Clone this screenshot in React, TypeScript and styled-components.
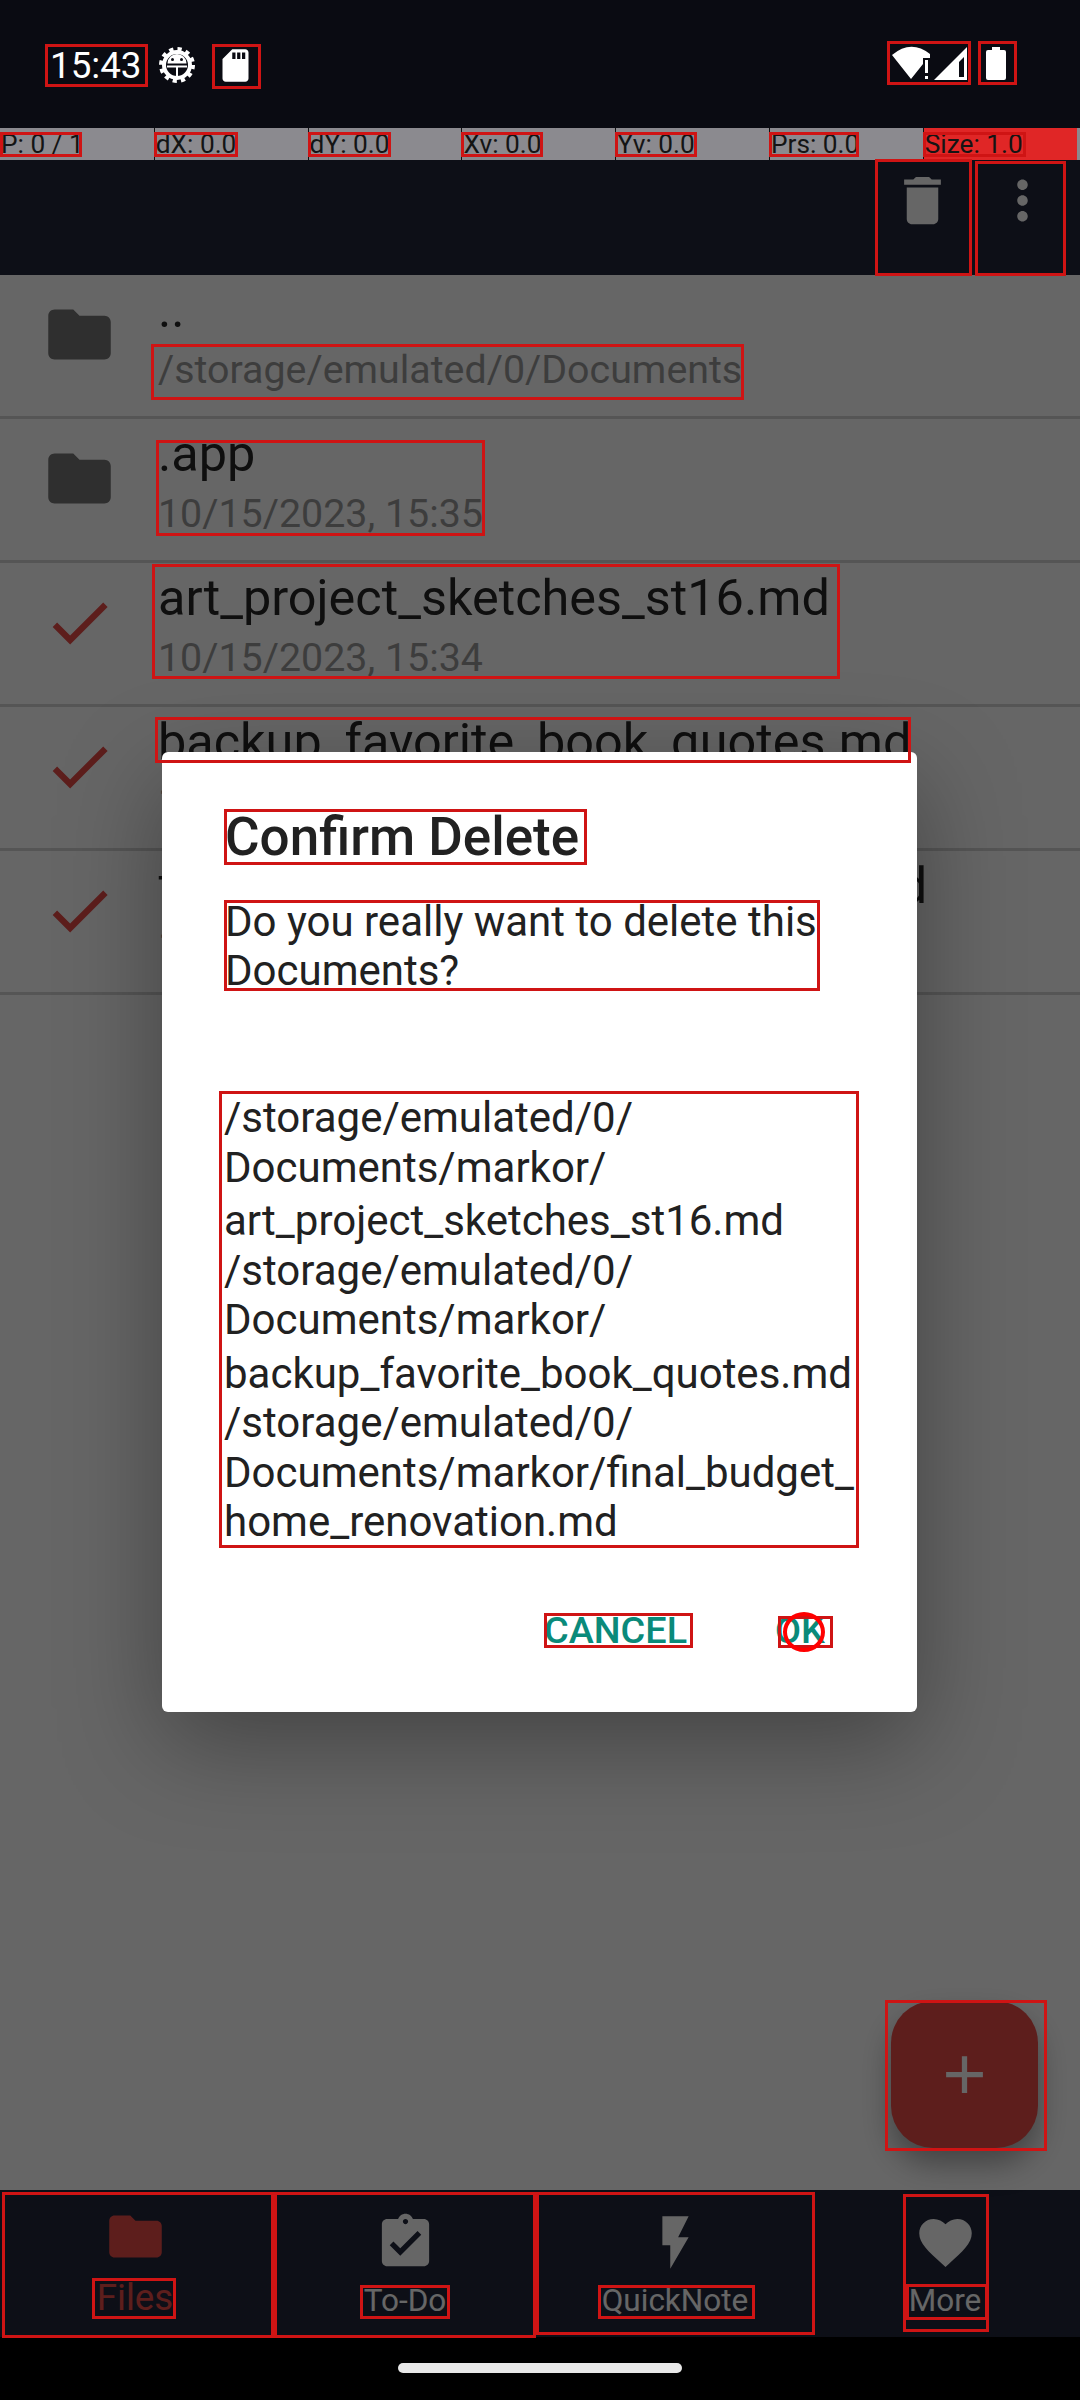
import React from 'react'
import styled, { createGlobalStyle } from 'styled-components'

const GlobalStyle = createGlobalStyle`
    html, body {
        margin: 0;
        padding: 0;
        background: #000;
    }
    * {
        box-sizing: border-box;
    }
`

const files = [
    { name: '..', sub: '/storage/emulated/0/Documents', icon: 'folder' },
    { name: '.app', sub: '10/15/2023, 15:35', icon: 'folder' },
    { name: 'art_project_sketches_st16.md', sub: '10/15/2023, 15:34', icon: 'check' },
    { name: 'backup_favorite_book_quotes.md', sub: '10/15/2023, 15:34', icon: 'check' },
    { name: 'final_budget_home_renovation.md', sub: '10/15/2023, 15:34', icon: 'check' },
]

const pointerCells = ['P: 0 / 1', 'dX: 0.0', 'dY: 0.0', 'Xv: 0.0', 'Yv: 0.0', 'Prs: 0.0', 'Size: 1.0']

const pathLines = [
    { text: '/storage/emulated/0/' },
    { text: 'Documents/markor/' },
    { text: 'art_project_sketches_st16.md', extra: 4 },
    { text: '/storage/emulated/0/' },
    { text: 'Documents/markor/' },
    { text: 'backup_favorite_book_quotes.md', extra: 4 },
    { text: '/storage/emulated/0/' },
    { text: 'Documents/markor/final_budget_' },
    { text: 'home_renovation.md' },
]

// debug bounds drawn on top of the screenshot: x1, y1, x2, y2
const debugBoxes = [
    [45, 44, 148, 87], [212, 44, 261, 89], [887, 41, 971, 85], [978, 41, 1017, 85],
    [0, 132, 82, 157], [154, 132, 238, 157], [308, 132, 391, 157], [461, 132, 543, 157],
    [615, 132, 697, 157], [769, 132, 859, 157], [923, 132, 1026, 157],
    [875, 159, 972, 276], [975, 161, 1066, 276],
    [151, 344, 744, 400], [156, 440, 485, 536], [152, 564, 840, 679], [155, 717, 911, 763],
    [224, 809, 587, 865], [224, 900, 820, 991], [219, 1091, 859, 1548],
    [544, 1613, 693, 1648], [778, 1616, 833, 1648],
    [885, 2000, 1047, 2151],
    [2, 2192, 274, 2338], [274, 2192, 536, 2338], [536, 2192, 815, 2335], [903, 2194, 989, 2332],
    [92, 2278, 176, 2319], [360, 2285, 450, 2319], [598, 2285, 755, 2319], [906, 2284, 988, 2320],
]

const FolderIcon = () => <path d="M10 4H4c-1.1 0-1.99.9-1.99 2L2 18c0 1.1.9 2 2 2h16c1.1 0 2-.9 2-2V8c0-1.1-.9-2-2-2h-8l-2-2z" />

const App = () => {
    return (
        <Page>
            <GlobalStyle />
            <StatusBar>
                <Clock>15:43</Clock>
                <GearSvg viewBox="0 0 36 36">
                    <circle cx="18" cy="18" r="13" fill="none" stroke="#fff" strokeWidth="4" />
                    <circle cx="18" cy="18" r="16" fill="none" stroke="#fff" strokeWidth="4" strokeDasharray="4.2 4.18" />
                    <path d="M8.5 16.5a9.5 9.5 0 0 1 19 0z" fill="#fff" />
                    <circle cx="13.5" cy="12.5" r="1.5" fill="#0a0b12" />
                    <circle cx="22.5" cy="12.5" r="1.5" fill="#0a0b12" />
                    <rect x="8" y="18.5" width="20" height="2" fill="#fff" />
                    <rect x="17" y="19" width="2" height="11" fill="#fff" />
                </GearSvg>
                <SdSvg viewBox="0 0 24 24" fill="#fff">
                    <path d="M18 2h-8L4 8v12c0 1.1.9 2 2 2h12c1.1 0 2-.9 2-2V4c0-1.1-.9-2-2-2zm-6 6h-2V4h2v4zm3 0h-2V4h2v4zm3 0h-2V4h2v4z" />
                </SdSvg>
                <StatusRight>
                    <svg width="84" height="44" viewBox="0 0 84 44">
                        <path d="M24 38 5 14Q24-2 43 13v4h-7v6z" fill="#fff" />
                        <rect x="38" y="19" width="3" height="13" fill="#fff" />
                        <rect x="38" y="35" width="3" height="3" fill="#fff" />
                        <path d="M47 39 80 6v33z" fill="#fff" />
                        <path d="M72 21l5-5v20h-5z" fill="#0a0b12" />
                    </svg>
                    <BatterySvg width="20" height="33" viewBox="0 0 20 33">
                        <path d="M6 0h8v3h4a2 2 0 0 1 2 2v26a2 2 0 0 1-2 2H2a2 2 0 0 1-2-2V5a2 2 0 0 1 2-2h4z" fill="#fff" />
                    </BatterySvg>
                </StatusRight>
            </StatusBar>

            <PointerBar>
                {pointerCells.map((cell, i) => (
                    <PointerCell key={cell} $alert={i === pointerCells.length - 1}>{cell}</PointerCell>
                ))}
            </PointerBar>

            <AppWindow>
                <Toolbar>
                    <ToolbarIcon viewBox="0 0 24 24">
                        <path d="M6 19c0 1.1.9 2 2 2h8c1.1 0 2-.9 2-2V7H6v12zM19 4h-3.5l-1-1h-5l-1 1H5v2h14V4z" />
                    </ToolbarIcon>
                    <ToolbarIcon viewBox="0 0 24 24">
                        <path d="M12 8c1.1 0 2-.9 2-2s-.9-2-2-2-2 .9-2 2 .9 2 2 2zm0 2c-1.1 0-2 .9-2 2s.9 2 2 2 2-.9 2-2-.9-2-2-2zm0 6c-1.1 0-2 .9-2 2s.9 2 2 2 2-.9 2-2-.9-2-2-2z" />
                    </ToolbarIcon>
                </Toolbar>

                <FileList>
                    {files.map((file) => (
                        <FileRow key={file.name}>
                            <RowIcon viewBox="0 0 24 24" $checked={file.icon === 'check'}>
                                {file.icon === 'check'
                                    ? <path d="M9 16.17L4.83 12l-1.41 1.41L9 19 21 7l-1.41-1.41z" />
                                    : <FolderIcon />}
                            </RowIcon>
                            <RowText>
                                <FileName>{file.name}</FileName>
                                <FileSub>{file.sub}</FileSub>
                            </RowText>
                        </FileRow>
                    ))}
                    <Fab>
                        <svg width="63" height="63" viewBox="0 0 24 24" fill="#fff">
                            <path d="M19 13h-6v6h-2v-6H5v-2h6V5h2v6h6v2z" />
                        </svg>
                    </Fab>
                </FileList>

                <BottomNav>
                    <NavItem $active>
                        <NavIcon viewBox="0 0 24 24"><FolderIcon /></NavIcon>
                        <NavLabel $active>Files</NavLabel>
                    </NavItem>
                    <NavItem>
                        <NavIcon viewBox="0 0 24 24">
                            <path d="M19 3h-4.18C14.4 1.84 13.3 1 12 1c-1.3 0-2.4.84-2.82 2H5c-1.1 0-2 .9-2 2v14c0 1.1.9 2 2 2h14c1.1 0 2-.9 2-2V5c0-1.1-.9-2-2-2zm-7 0c.55 0 1 .45 1 1s-.45 1-1 1-1-.45-1-1 .45-1 1-1zm-2 14l-4-4 1.41-1.41L10 14.17l6.59-6.59L18 9l-8 8z" />
                        </NavIcon>
                        <NavLabel>To-Do</NavLabel>
                    </NavItem>
                    <NavItem>
                        <NavIcon viewBox="0 0 24 24"><path d="M7 2v11h3v9l7-12h-4l4-8z" /></NavIcon>
                        <NavLabel>QuickNote</NavLabel>
                    </NavItem>
                    <NavItem>
                        <NavIcon viewBox="0 0 24 24">
                            <path d="M12 21.35l-1.45-1.32C5.4 15.36 2 12.28 2 8.5 2 5.42 4.42 3 7.5 3c1.74 0 3.41.81 4.5 2.09C13.09 3.81 14.76 3 16.5 3 19.58 3 22 5.42 22 8.5c0 3.78-3.4 6.86-8.55 11.54L12 21.35z" />
                        </NavIcon>
                        <NavLabel>More</NavLabel>
                    </NavItem>
                </BottomNav>

                <Scrim>
                    <Dialog>
                        <DialogTitle>Confirm Delete</DialogTitle>
                        <DialogMessage>Do you really want to delete this Documents?</DialogMessage>
                        <PathList>
                            {pathLines.map((line, i) => (
                                <PathLine key={i} $extra={line.extra || 0}>{line.text}</PathLine>
                            ))}
                        </PathList>
                        <DialogButtons>
                            <DialogButton>CANCEL</DialogButton>
                            <DialogButton>OK</DialogButton>
                        </DialogButtons>
                    </Dialog>
                </Scrim>
            </AppWindow>

            <GestureBar>
                <GesturePill />
            </GestureBar>

            {debugBoxes.map(([x1, y1, x2, y2]) => (
                <DebugBox key={`${x1}-${y1}`} $x={x1} $y={y1} $w={x2 - x1} $h={y2 - y1} />
            ))}
            <TouchMark />
        </Page>
    )
}

const fontStack = `Roboto, "Liberation Sans", sans-serif`

const Page = styled.div`
    position: relative;
    display: flex;
    flex-direction: column;
    width: 1080px;
    height: 2400px;
    overflow: hidden;
    font-family: ${fontStack};
    background: #000;
`

/* STATUS + POINTER */

const StatusBar = styled.div`
    display: flex;
    align-items: flex-start;
    height: 128px;
    padding: 44px 74px 0 50px;
    background: #0a0b12;
`
const Clock = styled.span`
    color: #fff;
    font-size: 36.75px;
    line-height: 43px;
`
const GearSvg = styled.svg`
    width: 36px;
    height: 36px;
    margin: 3px 0 0 17px;
`
const SdSvg = styled.svg`
    width: 39px;
    height: 39px;
    margin: 2px 0 0 21px;
`
const StatusRight = styled.div`
    display: flex;
    align-items: flex-start;
    margin: -3px 0 0 auto;
`
const BatterySvg = styled.svg`
    margin: 6px 0 0 15px;
`
const PointerBar = styled.div`
    display: grid;
    grid-template-columns: repeat(7, 153.8px);
    height: 32px;
    background: #8b8a8f;
`
const PointerCell = styled.div<{ $alert?: boolean }>`
    padding-left: 1px;
    border-left: 1px solid #111;
    background: ${({ $alert }) => ($alert ? '#e02626' : 'transparent')};
    color: #141414;
    font-size: 26.25px;
    line-height: 32px;
    white-space: nowrap;
    &:first-child {
        border-left: none;
    }
`

/* APP */

const AppWindow = styled.div`
    position: relative;
    display: flex;
    flex-direction: column;
    height: 2177px;
`
const Toolbar = styled.div`
    display: flex;
    justify-content: flex-end;
    align-items: flex-start;
    gap: 37px;
    height: 115px;
    padding: 9px 26px 0 0;
    background: #21263a;
`
const ToolbarIcon = styled.svg`
    width: 63px;
    height: 63px;
    fill: #fff;
`
const FileList = styled.div`
    position: relative;
    flex: 1;
    background: #fff;
`
const FileRow = styled.div`
    display: flex;
    height: 144px;
    padding-left: 42px;
    border-bottom: 3px solid #d4d4d4;
    overflow: hidden;
`
const RowIcon = styled.svg<{ $checked?: boolean }>`
    flex: none;
    width: 75px;
    height: 75px;
    margin-top: 22px;
    fill: ${({ $checked }) => ($checked ? '#e84c48' : '#757575')};
`
const RowText = styled.div`
    padding: 5px 0 0 41px;
`
const FileName = styled.div`
    color: #262626;
    font-size: 50.4px;
    line-height: 60px;
    white-space: nowrap;
`
const FileSub = styled.div`
    color: #9a9a9a;
    font-size: 39.375px;
    line-height: 60px;
    white-space: nowrap;
`
const Fab = styled.div`
    position: absolute;
    right: 42px;
    bottom: 42px;
    display: flex;
    align-items: center;
    justify-content: center;
    width: 147px;
    height: 147px;
    border-radius: 42px;
    background: #e84c48;
    box-shadow: 0 16px 30px rgba(0, 0, 0, 0.35);
`
const BottomNav = styled.div`
    display: grid;
    grid-template-columns: repeat(4, 1fr);
    height: 147px;
    background: #21263a;
`
const NavItem = styled.div<{ $active?: boolean }>`
    display: flex;
    flex-direction: column;
    align-items: center;
    padding-top: ${({ $active }) => ($active ? 15 : 21)}px;
    color: ${({ $active }) => ($active ? '#e84c48' : '#fff')};
`
const NavIcon = styled.svg`
    width: 63px;
    height: 63px;
    fill: currentColor;
`
const NavLabel = styled.div<{ $active?: boolean }>`
    margin-top: ${({ $active }) => ($active ? 8 : 8.5)}px;
    font-size: ${({ $active }) => ($active ? 36.75 : 31.5)}px;
    line-height: 1.17;
`

/* DIALOG */

const Scrim = styled.div`
    position: absolute;
    inset: 0;
    display: flex;
    justify-content: center;
    align-items: flex-start;
    padding: 592px 1px 0 0;
    background: rgba(0, 0, 0, 0.6);
`
const Dialog = styled.div`
    display: flex;
    flex-direction: column;
    width: 755px;
    height: 960px;
    padding: 57px 0 0 63px;
    border-radius: 6px;
    background: #fff;
    box-shadow: 0 30px 100px rgba(0, 0, 0, 0.35);
    color: #212121;
`
const DialogTitle = styled.div`
    font-size: 53px;
    font-weight: 500;
    line-height: 56px;
`
const DialogMessage = styled.div`
    width: 600px;
    margin-top: 32px;
    font-size: 42px;
    line-height: 49px;
`
const PathList = styled.div`
    margin: 98px 0 0 -1px;
    font-size: 42px;
    line-height: 49.5px;
    white-space: nowrap;
`
const PathLine = styled.div<{ $extra: number }>`
    margin-top: ${({ $extra }) => $extra}px;
`
const DialogButtons = styled.div`
    display: flex;
    justify-content: flex-end;
    gap: 88px;
    margin-top: 62px;
    padding-right: 92px;
`
const DialogButton = styled.div`
    color: #0a8a7a;
    font-size: 37.8px;
    font-weight: 500;
    line-height: 43px;
`

/* BOTTOM */

const GestureBar = styled.div`
    display: flex;
    justify-content: center;
    height: 63px;
    padding-top: 26px;
    background: #000;
`
const GesturePill = styled.div`
    width: 284px;
    height: 10px;
    border-radius: 5px;
    background: #e8e8e8;
`

/* DEBUG OVERLAY */

const DebugBox = styled.div<{ $x: number; $y: number; $w: number; $h: number }>`
    position: absolute;
    left: ${({ $x }) => $x}px;
    top: ${({ $y }) => $y}px;
    width: ${({ $w }) => $w}px;
    height: ${({ $h }) => $h}px;
    border: 3px solid #cf1414;
    pointer-events: none;
`
const TouchMark = styled.div`
    position: absolute;
    left: 783px;
    top: 1612px;
    width: 42px;
    height: 40px;
    border: 4px solid #f00;
    border-radius: 50%;
`

export default App
